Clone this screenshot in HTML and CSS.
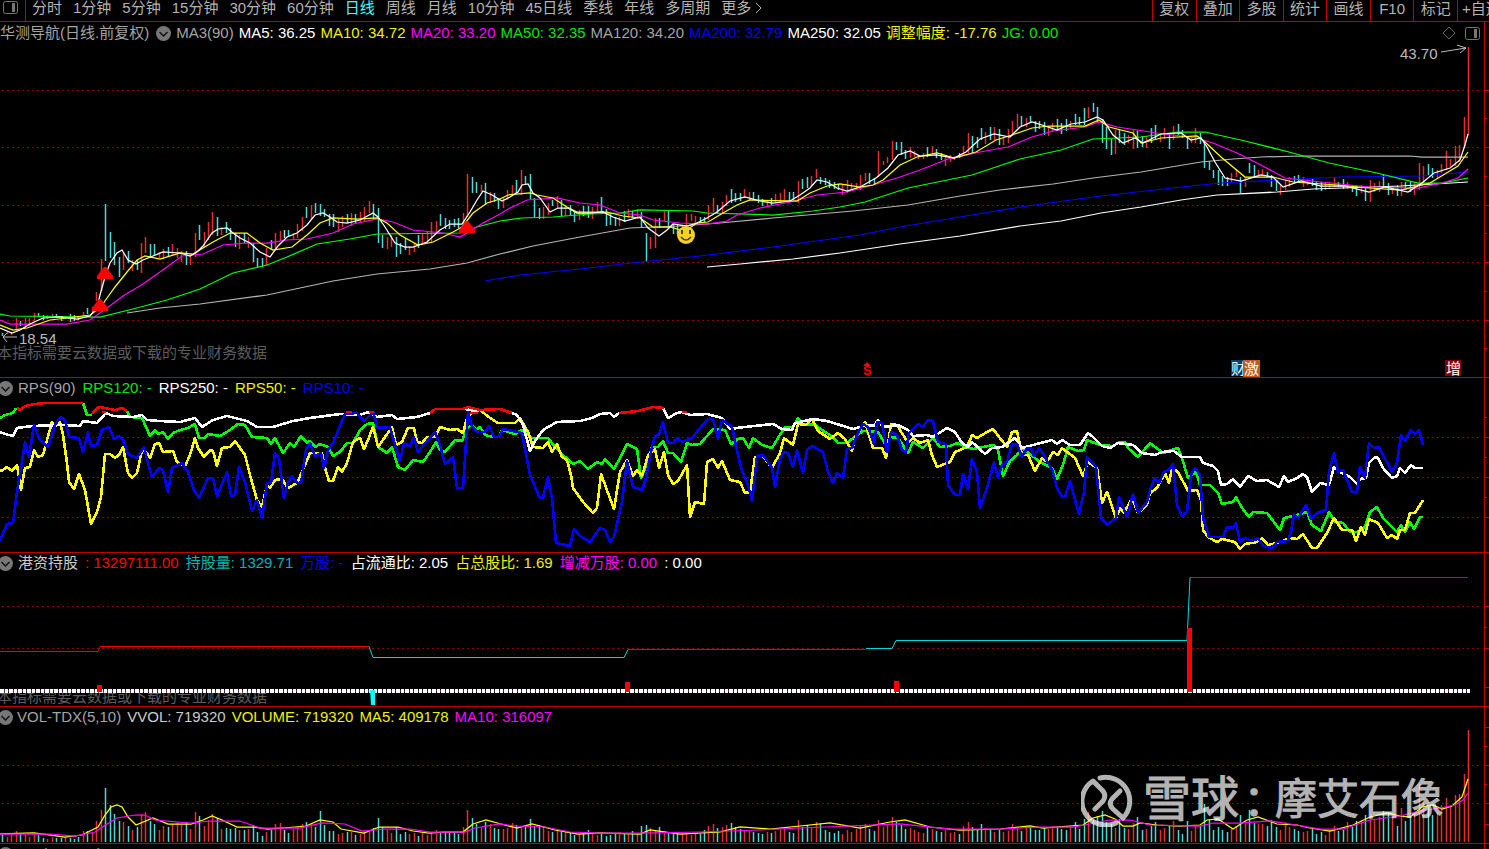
FILE: index.html
```
<!DOCTYPE html>
<html lang="zh-CN">
<head>
    <meta charset="UTF-8">
    <meta name="viewport" content="width=device-width, initial-scale=1.0">
    <title>华测导航 日线</title>
    <link rel="stylesheet" href="styles.css">
</head>
<body>
    <nav class="toolbar">
        <button class="side-toggle" aria-label="侧栏">
            <svg width="15" height="13" viewBox="0 0 15 13"><rect x="0.5" y="0.5" width="14" height="12" rx="2" fill="none" stroke="#777"/><rect x="9" y="2" width="3" height="9" fill="#777"/></svg>
        </button>
        <div class="periods">
            <button>分时</button>
            <button>1分钟</button>
            <button>5分钟</button>
            <button>15分钟</button>
            <button>30分钟</button>
            <button>60分钟</button>
            <button class="active">日线</button>
            <button>周线</button>
            <button>月线</button>
            <button>10分钟</button>
            <button>45日线</button>
            <button>季线</button>
            <button>年线</button>
            <button>多周期</button>
            <button class="more">更多
                <svg width="8" height="12" viewBox="0 0 8 12" fill="none" stroke="currentColor"><path d="M1 1L6 6L1 11"/></svg>
            </button>
        </div>
        <div class="tools">
            <button>复权</button>
            <button>叠加</button>
            <button>多股</button>
            <button>统计</button>
            <button>画线</button>
            <button>F10</button>
            <button>标记</button>
            <button class="cut">+自选</button>
        </div>
    </nav>

    <!-- K线 -->
    <section class="panel">
        <header class="legend legend-main">
            <span class="grey">华测导航(日线.前复权)</span>
            <svg class="fold" width="15" height="15" viewBox="0 0 15 15"><circle cx="7.5" cy="7.5" r="7.5" fill="#777"/><path d="M3.5 6L7.5 10L11.5 6" fill="none" stroke="#111" stroke-width="1.5"/></svg>
            <span class="grey">MA3(90)</span>
            <span class="white">MA5: 36.25</span>
            <span class="yellow">MA10: 34.72</span>
            <span class="magenta">MA20: 33.20</span>
            <span class="green">MA50: 32.35</span>
            <span class="grey">MA120: 34.20</span>
            <span class="blue">MA200: 32.79</span>
            <span class="white">MA250: 32.05</span>
            <span class="yellow">调整幅度: -17.76</span>
            <span class="green">JG: 0.00</span>
            <div class="window-icons">
                <svg width="14" height="14" viewBox="0 0 14 14"><path d="M7 1L13 7L7 13L1 7Z" fill="none" stroke="#666"/></svg>
                <svg width="15" height="13" viewBox="0 0 15 13"><rect x="0.5" y="0.5" width="14" height="12" rx="2" fill="none" stroke="#777"/><rect x="9" y="2" width="3" height="9" fill="#777"/></svg>
            </div>
        </header>
        <svg class="chart chart-main" viewBox="0 44 1489 333" preserveAspectRatio="none">
            <path class="grid" d="M2 90.5H1482M2 147.5H1482M2 205.5H1482M2 262.5H1482M2 320.5H1482"/>
            <path class="ticks" d="M1484 90.5h5M1484 118.5h3M1484 147.5h5M1484 176.5h3M1484 205.5h5M1484 233.5h3M1484 262.5h5M1484 291.5h3M1484 320.5h5M1484 348.5h3"/>
            <g id="candles"></g>
            <g class="line">
                <polyline class="s-white" points="707,267 740,264 793,259 840,253 900,244 960,236 1020,226 1061,221 1101,213 1141,207 1181,200 1217,195 1277,192 1313,189 1401,186 1468,182"/>
                <polyline class="s-blue" points="485,281 520,275 580,269 640,262 700,256 773,247 860,235 900,227 960,217 1020,207 1101,196 1181,187 1221,183 1301,179 1341,177 1422,176 1468,172"/>
                <polyline class="s-grey" points="127,313 160,308 200,304 267,295 300,288 333,281 377,274 430,269 467,263 500,254 533,246 580,237 630,228 680,226 720,223 773,218 853,211 908,205 960,196 1000,190 1053,184 1093,178 1141,172 1201,162 1233,159 1261,157 1301,156 1410,156 1422,157 1468,157"/>
                <polyline class="s-green" points="0,314 10,316 100,317 133,309 167,300 200,289 233,273 267,265 287,257 317,244 350,239 377,234 460,233 477,227 500,221 522,218 553,217 590,214 620,213 640,210 693,211 707,213 773,215 813,211 840,207 865,202 908,188 972,175 1020,159 1061,150 1093,139 1141,137 1177,132 1205,132 1245,141 1289,152 1329,163 1377,173 1418,183 1442,183 1468,178"/>
                <polyline class="s-magenta" points="0,320 10,324 67,324 90,320 107,308 123,296 143,284 160,272 182,256 203,254 223,245 247,243 267,243 287,240 307,239 333,233 353,224 377,219 393,222 413,230 443,233 460,237 467,233 483,223 500,214 510,208 527,200 557,198 580,203 600,205 620,213 640,215 653,220 680,223 707,224 727,221 737,215 760,208 790,202 817,195 847,192 873,185 900,177 920,170 948,159 980,152 1008,147 1032,137 1053,131 1085,127 1099,122 1117,127 1157,133 1197,138 1213,143 1237,153 1261,165 1285,178 1321,182 1369,187 1418,188 1442,183 1458,178 1468,169"/>
                <polyline class="s-yellow" points="0,325 13,330 27,328 50,320 67,318 90,315 100,308 107,298 115,287 127,272 137,260 145,256 160,259 180,253 193,254 213,242 230,233 247,233 260,243 273,250 292,247 307,235 320,223 333,218 357,219 377,218 387,223 400,235 418,245 433,242 453,232 462,227 473,213 487,203 500,199 508,195 530,193 537,195 553,198 567,207 577,212 607,212 623,216 640,218 653,227 670,227 685,231 697,223 708,222 723,213 737,205 750,200 797,201 810,193 827,186 840,184 860,187 873,185 883,180 900,165 917,157 937,153 954,158 976,152 996,140 1012,135 1032,128 1049,126 1085,126 1099,120 1109,127 1133,133 1141,143 1161,138 1197,136 1205,142 1221,157 1245,177 1273,177 1293,182 1337,185 1369,188 1401,190 1430,183 1458,166 1468,152"/>
                <polyline class="s-white" points="0,328 12,333 20,330 30,324 43,318 60,317 77,319 90,316 97,308 100,295 105,277 110,263 117,253 122,250 128,260 136,264 143,260 153,256 163,252 180,253 190,256 197,252 203,246 212,233 218,229 227,228 233,233 240,238 250,243 260,252 270,257 278,246 287,237 297,233 307,225 315,215 323,213 330,217 337,222 347,223 360,220 373,213 378,217 385,227 395,243 405,247 413,247 427,242 440,230 450,224 462,224 470,212 477,200 483,191 492,195 502,201 510,197 518,192 522,185 528,184 533,193 540,198 550,212 558,208 568,208 577,213 590,213 603,212 613,217 625,221 640,217 648,228 659,236 667,230 673,224 687,226 697,223 707,218 717,212 730,201 745,197 760,201 773,203 790,201 800,195 810,188 817,180 827,182 837,188 847,191 860,187 876,178 888,168 898,155 910,151 920,156 936,155 954,158 966,152 980,139 994,134 1010,137 1020,127 1032,122 1045,126 1057,130 1071,124 1085,122 1097,117 1103,120 1113,135 1123,143 1135,138 1143,143 1161,134 1181,133 1191,140 1201,138 1207,147 1215,162 1225,178 1241,181 1261,175 1273,177 1283,187 1301,181 1321,186 1345,186 1369,192 1385,187 1408,192 1422,183 1434,173 1450,168 1460,160 1465,145 1468,134"/>
            </g>
            <!-- 买点 -->
            <g fill="#f00">
                <path d="M104 267h2l7 9v3h-16v-3z"/>
                <path d="M99 299h2l7 9v3h-16v-3z"/>
                <path d="M466 221h2l7 9v3h-16v-3z"/>
            </g>
            <circle cx="686" cy="235" r="9" fill="#f4d21f"/>
            <path d="M682 230v4M690 230v4" stroke="#4a3c00" stroke-width="2"/>
            <path d="M681 237q5 6 10 0" fill="none" stroke="#4a3c00" stroke-width="1.5"/>
            <!-- 最高 / 最低价 -->
            <text class="price" x="1400" y="59">43.70</text>
            <path class="arrow" d="M1441 52L1466 48M1457 45L1466 48L1460 53"/>
            <text class="price" x="19" y="344">18.54</text>
            <path class="arrow" d="M17 337H3M7 333L3 337L7 342"/>
            <path d="M863 366h8l-4-4z" fill="#f00"/>
            <text class="sell" x="863" y="375">S</text>
            <rect x="1231" y="360" width="14" height="16" fill="#003c70"/>
            <text class="tag" x="1231" y="374">财</text>
            <rect x="1243" y="360" width="17" height="17" fill="#c4591c"/>
            <text class="tag" x="1244" y="374">激</text>
            <rect x="1445" y="360" width="16" height="16" fill="#800000"/>
            <text class="tag" x="1446" y="374">增</text>
        </svg>
        <p class="hint hint-main">本指标需要云数据或下载的专业财务数据</p>
    </section>

    <!-- RPS -->
    <section class="panel">
        <header class="legend legend-wide">
            <svg class="fold" width="15" height="15" viewBox="0 0 15 15"><circle cx="7.5" cy="7.5" r="7.5" fill="#777"/><path d="M3.5 6L7.5 10L11.5 6" fill="none" stroke="#111" stroke-width="1.5"/></svg>
            <span class="grey">RPS(90)</span>
            <span class="green">RPS120: -</span>
            <span class="white">RPS250: -</span>
            <span class="yellow">RPS50: -</span>
            <span class="blue">RPS10: -</span>
        </header>
        <svg class="chart chart-rps" viewBox="0 398 1489 154" preserveAspectRatio="none">
            <path class="grid" d="M2 437.5H1482M2 477.5H1482M2 517.5H1482"/>
            <path class="ticks" d="M1484 397.5h5M1484 417.5h3M1484 437.5h5M1484 457.5h3M1484 477.5h5M1484 497.5h3M1484 517.5h5"/>
            <g class="line bold">
                <polyline class="s-green" points="0,418 5,415 13,413 16,408"/>
                <polyline class="s-green" points="83,403 87,415 92,415"/>
                <polyline class="s-green" points="127,411 130,417 142,418 150,436 155,430 158,434 163,432 168,439 173,433 180,430 188,428 195,424 199,438 205,438 208,434 220,436 230,430 238,424 245,425 252,437 267,438 271,444 275,438 283,453 290,443 294,447 301,436 307,443 310,441 315,447 320,444 328,447 333,456 340,452 347,443 353,443 360,430 367,424 373,423 378,447 387,453 392,447 398,467 405,470 413,460 423,462 430,452 436,442 440,450 445,452 455,440 462,441 467,428 472,425 476,430 480,427 485,435 493,437 499,437 502,430 515,434 522,430 532,438 548,438 555,447 563,455 573,464 580,461 588,469 597,462 602,464 605,459 614,469 620,458 627,444 637,449 641,478 647,465 652,447 658,447 663,441 668,453 673,453 681,462 687,443 692,445 700,444 713,429 725,430 731,444 738,439 743,438 749,448 753,438 762,445 772,448 778,438 785,427 793,427 798,418 803,424 815,425 825,432 833,437 838,443 847,443 853,438 863,431 878,432 887,447 890,437 898,438 908,453 913,442 923,448 933,438 940,447 950,446 957,443 967,447 973,449 983,447 994,445 998,450 1003,476 1010,461 1017,455 1022,448 1030,454 1040,462 1052,468 1057,479 1063,465 1068,447 1078,451 1084,450 1087,440 1100,445 1113,446 1120,442 1125,442 1128,448 1138,457 1150,443 1163,453 1178,448 1182,458 1188,478 1196,472 1200,485 1210,485 1218,493 1222,504 1233,502 1236,497 1242,508 1249,517 1253,512 1267,513 1280,530 1284,518 1297,515 1307,512 1312,525 1321,531 1329,512 1335,522 1343,523 1350,532 1357,532 1365,527 1370,512 1377,507 1383,518 1397,532 1401,525 1405,532 1410,522 1414,529 1420,517 1423,517"/>
                <polyline class="s-yellow" points="0,471 3,470 7,467 12,471 17,465 21,490 25,468 30,467 34,450 38,457 43,455 47,440 52,422 55,427 60,422 63,435 67,463 69,482 74,489 79,474 85,490 91,524 97,512 101,497 105,454 110,454 115,458 119,455 123,447 128,473 132,478 137,473 142,450 146,452 150,458 155,444 159,443 163,452 173,451 177,462 185,466 190,455 195,438 198,448 204,457 210,450 213,451 217,466 222,448 230,447 235,441 245,455 250,475 257,500 262,507 267,485 270,488 275,480 282,479 288,488 297,483 302,472 310,453 322,453 325,468 329,481 333,481 338,467 342,472 347,463 353,442 360,438 364,449 368,440 373,427 378,447 385,437 392,427 396,445 402,442 408,428 414,428 417,442 422,443 427,437 435,437 440,427 450,430 457,429 463,433 467,418 473,411 480,410 490,418 498,423 515,423 520,418 528,432 533,447 543,448 548,442 552,452 557,444 562,457 567,460 571,475 573,488 583,502 593,513 597,508 601,474 614,509 620,472 627,460 633,476 637,470 642,476 648,455 655,449 659,468 664,452 668,475 673,484 678,481 687,465 690,517 695,502 704,504 707,462 713,459 718,468 722,461 730,480 740,482 745,493 750,492 755,457 762,455 772,468 780,453 784,438 793,445 798,424 806,425 812,419 818,431 830,439 838,433 845,439 852,451 855,438 865,422 873,448 882,448 886,458 891,424 897,425 908,443 913,438 920,443 928,440 932,455 937,467 950,462 955,452 967,447 972,435 977,438 987,432 993,429 1007,447 1012,432 1017,431 1022,455 1028,455 1035,471 1042,458 1047,462 1053,452 1058,455 1062,448 1075,458 1083,476 1088,462 1097,468 1102,503 1107,492 1116,518 1120,508 1124,513 1132,498 1138,513 1147,505 1150,493 1157,488 1165,473 1169,483 1172,468 1178,472 1188,491 1197,490 1201,500 1203,530 1208,537 1217,542 1222,539 1235,542 1240,549 1245,544 1257,542 1262,538 1268,545 1280,542 1290,538 1297,539 1303,534 1312,548 1317,548 1327,533 1334,518 1342,530 1352,530 1356,541 1361,527 1365,535 1369,519 1378,523 1387,538 1392,535 1397,539 1400,530 1405,530 1410,513 1415,513 1423,500"/>
                <polyline class="s-white" points="0,432 5,434 13,436 17,428 32,426 63,425 80,426 83,421 97,423 106,413 113,416 133,417 142,415 147,420 160,421 180,422 195,418 202,427 213,420 227,416 247,421 257,427 273,427 293,421 310,418 340,414 360,415 368,412 377,417 392,415 397,419 417,417 430,413 435,409 463,409 480,410 500,409 512,413 517,415 523,425 530,451 535,441 543,430 557,422 580,421 592,418 600,414 610,413 614,417 619,413 638,411 653,407 663,408 668,418 677,413 682,412 690,415 707,414 722,418 730,429 737,428 745,427 773,424 782,429 792,430 795,423 813,419 827,421 840,425 853,429 867,425 874,426 878,420 883,427 898,425 908,430 913,436 927,435 933,437 947,428 955,432 962,443 968,447 972,442 985,454 992,448 1002,447 1015,438 1022,448 1033,445 1052,440 1057,444 1062,440 1070,445 1080,445 1088,433 1093,437 1102,446 1110,448 1118,443 1133,445 1142,453 1155,455 1162,452 1174,451 1182,457 1200,457 1203,463 1213,466 1218,471 1221,485 1227,484 1233,479 1240,487 1248,476 1257,481 1267,480 1279,487 1284,476 1288,482 1297,478 1303,474 1307,477 1312,492 1320,483 1329,485 1334,467 1340,472 1350,477 1357,484 1360,479 1366,478 1369,463 1375,457 1378,458 1383,468 1392,478 1397,476 1400,468 1405,473 1411,465 1415,468 1423,468"/>
                <polyline class="s-blue" points="0,541 7,524 13,523 17,492 21,468 25,442 29,457 34,425 40,440 48,447 55,425 61,417 65,420 69,437 79,438 83,452 88,432 91,446 97,445 102,430 109,427 114,439 119,436 123,440 128,454 137,458 144,447 148,463 152,477 159,468 163,470 168,492 172,468 182,463 188,472 194,490 199,498 208,478 213,478 217,496 227,472 231,496 235,495 239,467 245,482 252,511 257,500 262,518 267,483 271,483 275,453 279,458 284,498 288,482 292,476 297,483 301,483 306,450 310,443 315,456 321,453 324,468 328,450 333,443 345,414 357,413 364,421 373,412 378,428 390,427 396,448 400,461 404,443 410,446 414,437 418,452 425,443 435,432 440,445 445,464 453,457 457,488 463,488 465,458 468,412 472,426 477,432 485,432 489,426 494,437 499,437 503,429 522,433 530,475 540,498 543,498 548,477 552,498 556,543 570,546 574,529 580,536 590,542 600,528 605,530 610,542 614,537 622,502 627,461 633,487 642,490 646,478 652,447 655,436 659,435 663,422 668,443 673,443 677,438 682,442 692,438 700,428 708,419 713,419 718,439 722,420 732,427 737,450 741,468 748,485 752,501 757,456 763,455 772,468 775,487 780,458 784,452 788,453 793,467 797,450 803,473 807,450 812,446 823,452 828,472 833,483 837,473 843,478 847,449 852,448 857,435 863,424 868,427 874,444 877,422 882,423 887,452 891,432 897,435 902,450 906,452 909,433 918,424 923,427 928,420 933,421 938,442 946,444 948,485 955,495 960,495 963,474 968,489 972,459 977,472 980,508 987,488 994,462 998,478 1002,465 1007,462 1012,444 1017,444 1022,457 1027,448 1031,448 1034,456 1039,448 1044,455 1053,472 1057,488 1062,497 1065,497 1070,481 1079,514 1084,492 1087,457 1096,467 1101,518 1107,525 1116,518 1119,497 1127,517 1133,494 1138,513 1147,502 1151,487 1155,478 1159,483 1164,472 1169,470 1173,464 1177,505 1182,516 1187,512 1191,475 1195,468 1200,475 1203,518 1209,537 1223,537 1227,527 1233,528 1236,523 1240,542 1245,538 1252,541 1258,538 1263,546 1272,548 1277,542 1288,541 1291,532 1294,514 1298,518 1306,505 1311,519 1317,513 1326,510 1329,472 1334,453 1338,472 1343,470 1352,492 1357,492 1360,467 1365,478 1369,443 1374,448 1379,447 1392,472 1397,463 1401,435 1405,441 1411,430 1415,434 1419,430 1423,445"/>
                <!-- 强势区间 -->
                <path class="s-red" d="M17 408L20 410L25 406L35 404L45 403L83 403M92 414L97 408L100 407L115 410L122 408L127 411M102 412h4M346 412h6M369 412h5M430 413L435 409L463 409L468 407L480 410L500 409L512 413M470 413h8M619 413L638 411L653 407L664 408M682 412h5"/>
            </g>
        </svg>
    </section>

    <!-- 港资持股 -->
    <section class="panel">
        <header class="legend legend-wide">
            <svg class="fold" width="15" height="15" viewBox="0 0 15 15"><circle cx="7.5" cy="7.5" r="7.5" fill="#777"/><path d="M3.5 6L7.5 10L11.5 6" fill="none" stroke="#111" stroke-width="1.5"/></svg>
            <span class="light">港资持股</span>
            <span class="red">: 13297111.00</span>
            <span class="teal">持股量: 1329.71</span>
            <span class="blue">万股: -</span>
            <span class="white">占流通比: 2.05</span>
            <span class="yellow">占总股比: 1.69</span>
            <span class="magenta">增减万股: 0.00</span>
            <span class="white">: 0.00</span>
        </header>
        <svg class="chart chart-hk" viewBox="0 573 1489 133" preserveAspectRatio="none">
            <path class="grid" d="M2 606.5H1482M2 648.5H1482"/>
            <path class="ticks" d="M1484 606.5h5M1484 627.5h3M1484 648.5h5M1484 687.5h5"/>
            <path class="hold-up" d="M0 651.5H98L100 646.5H369M628 649.5H866M1190 577.5H1468"/>
            <path class="hold-down" d="M369 646.5L373 657.5H624L628 649.5M866 648.5H892L896 640.5H1187L1190 577.5"/>
            <path d="M0 691H1470" stroke="#5c1e5c" stroke-width="2"/>
            <path class="zero" d="M0 691H1470"/>
            <path d="M97 685h5v7h-5zM625 682h5v10h-5zM894 681h5v11h-5zM1187 628h5v64h-5z" fill="#f00"/>
            <path d="M370 690h5v15h-4z" fill="#0ff"/>
        </svg>
        <p class="hint hint-hk">本指标需要云数据或下载的专业财务数据</p>
    </section>

    <!-- 成交量 -->
    <section class="panel">
        <header class="legend">
            <svg class="fold" width="15" height="15" viewBox="0 0 15 15"><circle cx="7.5" cy="7.5" r="7.5" fill="#777"/><path d="M3.5 6L7.5 10L11.5 6" fill="none" stroke="#111" stroke-width="1.5"/></svg>
            <span class="grey">VOL-TDX(5,10)</span>
            <span class="light">VVOL: 719320</span>
            <span class="yellow">VOLUME: 719320</span>
            <span class="yellow">MA5: 409178</span>
            <span class="magenta">MA10: 316097</span>
        </header>
        <svg class="chart chart-vol" viewBox="0 727 1489 116" preserveAspectRatio="none">
            <path class="grid" d="M2 765.5H1482M2 803.5H1482"/>
            <path class="ticks" d="M1484 727.5h5M1484 746.5h3M1484 765.5h5M1484 784.5h3M1484 803.5h5M1484 824.5h5"/>
            <g id="volumes"></g>
            <g class="line">
                <polyline class="s-yellow" points="0,834 34,833 65,837 82,835 98,827 105,815 111,807 117,805 122,807 128,817 136,825 153,818 168,824 191,824 203,820 212,816 222,820 237,827 253,827 268,829 295,827 306,826 320,820 333,822 341,829 364,833 379,827 398,827 413,831 429,833 444,832 463,832 473,824 486,820 501,824 517,828 532,824 555,830 578,834 600,833 640,834 650,830 680,834 720,832 740,827 770,829 800,826 830,823 860,828 890,822 905,820 930,827 960,830 1000,829 1030,826 1043,828 1083,825 1093,818 1105,815 1115,819 1123,826 1133,826 1140,823 1157,825 1180,826 1200,825 1207,820 1218,819 1233,829 1247,820 1258,817 1277,824 1297,825 1310,828 1330,831 1353,825 1370,817 1387,813 1400,816 1410,817 1422,807 1433,805 1442,809 1452,806 1462,797 1468,779"/>
                <polyline class="s-magenta" points="0,834 50,834 75,836 95,832 107,824 117,818 135,815 145,815 155,820 190,823 210,821 240,821 260,828 300,828 322,823 345,824 362,831 385,829 410,829 430,832 465,832 475,828 500,824 515,826 545,827 570,832 600,833 640,833 700,832 760,830 800,828 850,826 900,824 950,829 1000,829 1040,827 1073,827 1085,825 1110,820 1130,820 1150,825 1200,826 1213,823 1240,823 1270,821 1290,824 1320,829 1343,829 1370,820 1400,816 1420,811 1440,808 1455,805 1463,800 1468,793"/>
            </g>
        </svg>
        <div class="watermark">
            <svg width="54" height="54" viewBox="0 0 54 54" fill="none" stroke="currentColor" stroke-width="5" stroke-linecap="round" stroke-linejoin="round">
                <path d="M19 5A24 24 0 0 1 42 45L32 36Q27 31 31 26L39 18"/>
                <path d="M35 50A24 24 0 0 1 12 8L21 17Q26 22 22 28L14 36"/>
            </svg>
            <span class="brand">雪球</span>
            <span class="author" lang="zh-TW">：</span>
            <span class="author">摩艾石像</span>
        </div>
    </section>

    <section class="panel last">
        <header class="legend">
            <svg class="fold" width="15" height="15" viewBox="0 0 15 15"><circle cx="7.5" cy="7.5" r="7.5" fill="#777"/><path d="M3.5 6L7.5 10L11.5 6" fill="none" stroke="#111" stroke-width="1.5"/></svg>
            <span class="grey">RSI(6,12,24)</span>
            <span class="white">RSI1: 80.60</span>
            <span class="yellow">RSI2: 66.16</span>
            <span class="magenta">RSI3: 58.24</span>
        </header>
    </section>

    <script src="app.js"></script>
</body>
</html>
```
FILE: styles.css
```
* {
    box-sizing: border-box;
}
body {
    margin: 0;
    height: 100vh;
    overflow: hidden;
    background: #000;
    color: #b4b4b4;
    font-family: "Liberation Sans", "Noto Sans CJK SC", sans-serif;
    font-size: 15px;
    line-height: 16px;
}
button {
    padding: 0;
    border: none;
    background: none;
    color: inherit;
    font: inherit;
    white-space: nowrap;
    cursor: pointer;
}
.toolbar {
    display: flex;
    height: 22px;
    border-bottom: 1px solid #c00000;
}
.side-toggle {
    display: flex;
    width: 26px;
    padding: 1px 0 0 3px;
    border-right: 1px solid #c00000;
}
.periods {
    display: flex;
    flex: 1;
    gap: 11px;
    padding-left: 6px;
    align-items: flex-start;
}
.periods .active {
    color: #4ff;
}
.more {
    display: flex;
    align-items: center;
    gap: 4px;
}
.tools {
    display: grid;
    grid-template-columns: repeat(7, 1fr) 32px;
    width: 337px;
}
.tools button {
    padding-bottom: 4px;
    border-left: 1px solid #c00000;
}
.tools .cut {
    padding-left: 4px;
    overflow: hidden;
    text-align: left;
}
.panel {
    position: relative;
    border-bottom: 1px solid #c00000;
}
.panel::after {
    content: "";
    position: absolute;
    top: 0;
    bottom: 0;
    right: 4px;
    width: 1px;
    background: #c00000;
}
.legend {
    display: flex;
    align-items: center;
    gap: 6px;
    height: 20px;
    white-space: nowrap;
}
.legend-wide {
    gap: 7px;
}
.legend-main {
    gap: 5px;
    height: 22px;
}
.fold {
    flex: none;
    margin-left: 2px;
}
.fold:first-child {
    margin: 0 -2px 0 -2px;
}
.window-icons {
    display: flex;
    align-items: center;
    gap: 9px;
    margin-left: auto;
    margin-right: 9px;
}
.grey { color: #a4a4a4; }
.light { color: #ccc; }
.white { color: #fff; }
.yellow { color: #f0f000; }
.magenta { color: #f0f; }
.green { color: #00e600; }
.blue { color: #0000f0; }
.red { color: #f00; }
.teal { color: #00b4b4; }

.chart {
    display: block;
    width: 100%;
}
.chart-main { height: 333px; }
.chart-rps { height: 154px; }
.chart-hk { height: 133px; }
.chart-vol { height: 116px; }

.grid {
    stroke: #8c0000;
    stroke-dasharray: 2 3;
}
.ticks {
    stroke: #c00000;
}
.line {
    fill: none;
    stroke-width: 1.25;
}
.bold {
    stroke-width: 2.6;
    stroke-linejoin: round;
    shape-rendering: crispEdges;
}
.s-white { stroke: #fff; }
.s-yellow { stroke: #ff0; }
.s-magenta { stroke: #f0f; }
.s-green { stroke: #0f0; }
.s-grey { stroke: #b4b4b4; }
.s-blue { stroke: #00f; }
.s-red { stroke: #f00; }

.up,
.down,
.flat {
    stroke-width: 1.5;
}
.up { stroke: #e62c2c; }
.down { stroke: #4cd8d8; }
.flat { stroke: #ccc; }

.price {
    fill: #bbb;
    font-size: 15px;
}
.arrow {
    fill: none;
    stroke: #bbb;
}
.sell {
    fill: #f00;
    font-size: 13px;
    font-weight: bold;
}
.tag {
    fill: #fff;
    font-size: 15px;
}
.hold-up,
.hold-down {
    fill: none;
    stroke: #e80000;
}
.hold-down {
    stroke: #00d8d8;
}
.zero {
    stroke: #fff;
    stroke-width: 4;
    stroke-dasharray: 4 1 3 1;
}
.hint {
    position: absolute;
    left: -3px;
    margin: 0;
    color: #5c5c5c;
}
.hint-main {
    bottom: 16px;
}
.hint-hk {
    bottom: 1px;
    z-index: -1;
}
.watermark {
    position: absolute;
    right: 46px;
    bottom: 16px;
    display: flex;
    align-items: center;
    color: #fff;
    opacity: 0.7;
    line-height: 54px;
    -webkit-text-stroke: 1px #fff;
}
.brand {
    margin-left: 8px;
    margin-right: -6px;
    font-size: 48px;
}
.author {
    font-size: 42px;
}
.author:lang(zh-TW) {
    font-family: "Noto Sans CJK TC", sans-serif;
}
.last {
    border-bottom: none;
}
```
FILE: app.js
```
// r = up, c = down, w = flat, then top-bottom
const candles = `
c333-336 r332-334 r332-335 r318-332 c321-326 r318-328 r318-326 r313-322 c313-317 c315-320
r315-319 r314-318 c314-318 c316-321 r316-319 c314-322 c315-321 c316-320 r312-318 c308-314
r307-313 r292-301 r259-291 c204-261 c232-258 c242-265 c257-277 r253-270 c251-263 r260-271
c260-270 r243-273 r237-253 c244-258 c244-255 r252-258 r249-259 c247-257 r244-255 r248-258
r251-262 c251-265 r254-265 r233-257 c225-240 r232-247 r222-240 r212-235 c217-236 r227-235
c222-233 c228-240 c233-247 r235-249 c233-243 r237-248 c243-262 c258-268 c258-267 r248-266
c240-250 r233-249 r231-241 w230-238 c230-237 r233-240 r224-238 r217-231 c207-218 r205-219
c203-213 c204-216 c209-217 c214-226 c214-227 r218-232 r216-227 c214-223 r213-226 c214-223
r212-223 r207-221 r201-213 c204-219 c208-243 c235-248 r237-249 r235-247 c237-257 c243-254
c238-250 r246-255 r243-252 c235-248 r233-245 r231-243 r222-242 r221-234 c214-226 c218-229
c220-229 c219-227 c218-228 r213-224 r174-217 c177-193 c182-193 r185-192 c183-205 r192-203
c193-202 c198-209 r197-208 r190-200 r185-196 c180-193 r170-195 c176-185 c174-199 c198-217
c208-219 r207-219 r203-215 c200-206 r196-208 c200-216 r205-216 c205-215 c212-222 r210-220
c206-216 c206-218 r207-219 r202-213 c197-214 c209-226 c213-225 c217-226 r217-226 c211-222
r209-218 c211-218 r209-219 c212-227 c233-262 r237-249 r218-248 c218-228 r211-221 c211-226
c224-234 c225-234 r225-230 r214-228 r214-221 r216-223 c217-223 c217-222 r205-220 r198-212
c205-213 r202-213 r195-206 c189-203 c193-202 c193-201 r189-198 r192-200 c192-200 c195-203
c199-206 r200-207 c198-205 r194-203 r193-203 r189-202 c192-201 c192-200 r181-203 c179-189
c177-188 r176-186 r169-178 c177-184 c178-185 c180-188 c182-189 c184-190 r185-195 r180-193
r183-190 r183-189 r175-190 r173-181 c173-184 c178-185 r151-177 r161-165 r157-163 r141-160
c142-150 c142-155 c150-159 r147-158 r151-157 r155-159 r153-159 c147-157 r146-154 c149-158
c153-160 r157-166 r155-162 r156-160 c153-158 r146-155 r133-153 c136-153 c137-148 c128-140
r132-144 c127-140 r127-140 c129-145 r137-145 r129-143 r121-136 r114-128 c116-126 r118-127
c116-123 c121-132 c121-129 c122-135 r126-136 r123-132 c119-130 c123-134 c119-131 r121-128
c114-125 c117-125 c108-125 r107-118 c103-112 c107-122 c119-143 c127-149 c139-155 r130-154
c130-143 c133-145 r135-143 r129-149 c131-148 c136-147 r136-148 c128-143 c125-140 r133-142
r128-139 c133-149 r126-140 c124-135 c130-138 c136-149 r136-143 r128-143 c133-144 c140-168
c161-170 c170-178 c170-185 c176-186 c177-186 r173-182 r169-177 c177-193 r177-187 c163-173
c165-177 r170-177 r169-176 c172-177 c175-187 c180-191 r185-195 r179-190 r177-187 c176-183
c175-182 r177-187 r179-185 c178-186 c182-190 c182-191 r183-190 r182-189 r177-187 c182-187
c179-189 r182-189 c185-192 c185-196 r185-193 c187-201 r180-202 r183-192 r181-192 c175-187
c183-195 r186-194 c185-196 r182-196 c182-190 c182-192 r183-195 r163-190 r166-183 c164-175
c168-178 r170-178 r164-173 r151-170 r159-168 r146-166 r145-162 r117-148 r47-135`.trim().split(/\s+/);

const volumes = [
    7, 5, 7, 11, 8, 7, 5, 8, 7, 4, 3, 5, 4, 4, 5, 4, 3, 5, 11, 11, 10, 21, 32, 54,
    37, 28, 21, 20, 16, 12, 15, 28, 30, 21, 18, 12, 16, 15, 18, 19, 17, 20, 13, 30,
    26, 16, 22, 28, 24, 13, 14, 13, 14, 12, 12, 13, 17, 10, 6, 10, 12, 18, 19, 12,
    9, 13, 15, 18, 20, 18, 15, 31, 17, 11, 11, 8, 9, 10, 10, 7, 8, 11, 10, 14,
    24, 15, 12, 9, 15, 8, 10, 8, 9, 6, 9, 7, 10, 12, 9, 10, 10, 10, 8, 15,
    32, 24, 18, 15, 20, 18, 14, 13, 13, 14, 19, 17, 14, 15, 23, 16, 17, 16, 11, 10, 12,
    10, 11, 9, 7, 8, 10, 12, 9, 7, 8, 6, 7, 9, 10, 9, 8, 11, 9, 16, 17,
    14, 12, 15, 11, 9, 8, 10, 9, 8, 7, 9, 8, 12, 16, 18, 14, 15, 17, 19, 15,
    13, 12, 11, 10, 9, 8, 10, 9, 11, 12, 13, 10, 9, 22, 15, 17, 14, 20, 18, 12,
    10, 9, 11, 8, 12, 10, 13, 16, 18, 13, 11, 22, 15, 18, 25, 20, 17, 13, 14, 12,
    10, 9, 15, 13, 11, 10, 12, 9, 10, 8, 16, 20, 15, 13, 18, 14, 12, 10, 12,
    10, 11, 18, 14, 11, 14, 14, 12, 12, 14, 13, 16, 15, 13, 12, 15, 20, 13, 23, 30,
    22, 26, 31, 20, 18, 14, 23, 14, 13, 19, 25, 12, 13, 16, 20, 12, 14, 16, 21, 12,
    8, 21, 11, 16, 16, 38, 22, 12, 15, 12, 10, 13, 16, 27, 18, 32, 19, 18, 18, 16,
    22, 15, 12, 20, 15, 13, 11, 10, 11, 13, 8, 10, 7, 12, 16, 11, 12, 20, 15, 21,
    22, 27, 28, 22, 25, 31, 30, 25, 16, 34, 21, 25, 28, 58, 43, 35, 27, 30, 37, 44,
    35, 47, 48, 68, 112
];

const NS = 'http://www.w3.org/2000/svg';
const kinds = { r: 'up', c: 'down', w: 'flat' };
const step = 4.468;
const lastX = 1468;
const volumeBase = 842;

function addBar(parent, x, top, bottom, kind) {
    const line = document.createElementNS(NS, 'line');
    line.setAttribute('x1', x);
    line.setAttribute('x2', x);
    line.setAttribute('y1', top);
    line.setAttribute('y2', bottom);
    line.setAttribute('class', kinds[kind]);
    parent.appendChild(line);
}

const candleGroup = document.getElementById('candles');
const volumeGroup = document.getElementById('volumes');

candles.forEach((item, i) => {
    const [top, bottom] = item.slice(1).split('-').map(Number);
    const x = Math.round(lastX - (candles.length - 1 - i) * step) + 0.5;
    const volume = volumes[volumes.length - candles.length + i] || 10;
    addBar(candleGroup, x, top, bottom, item[0]);
    addBar(volumeGroup, x, volumeBase - volume, volumeBase, item[0]);
});
```
